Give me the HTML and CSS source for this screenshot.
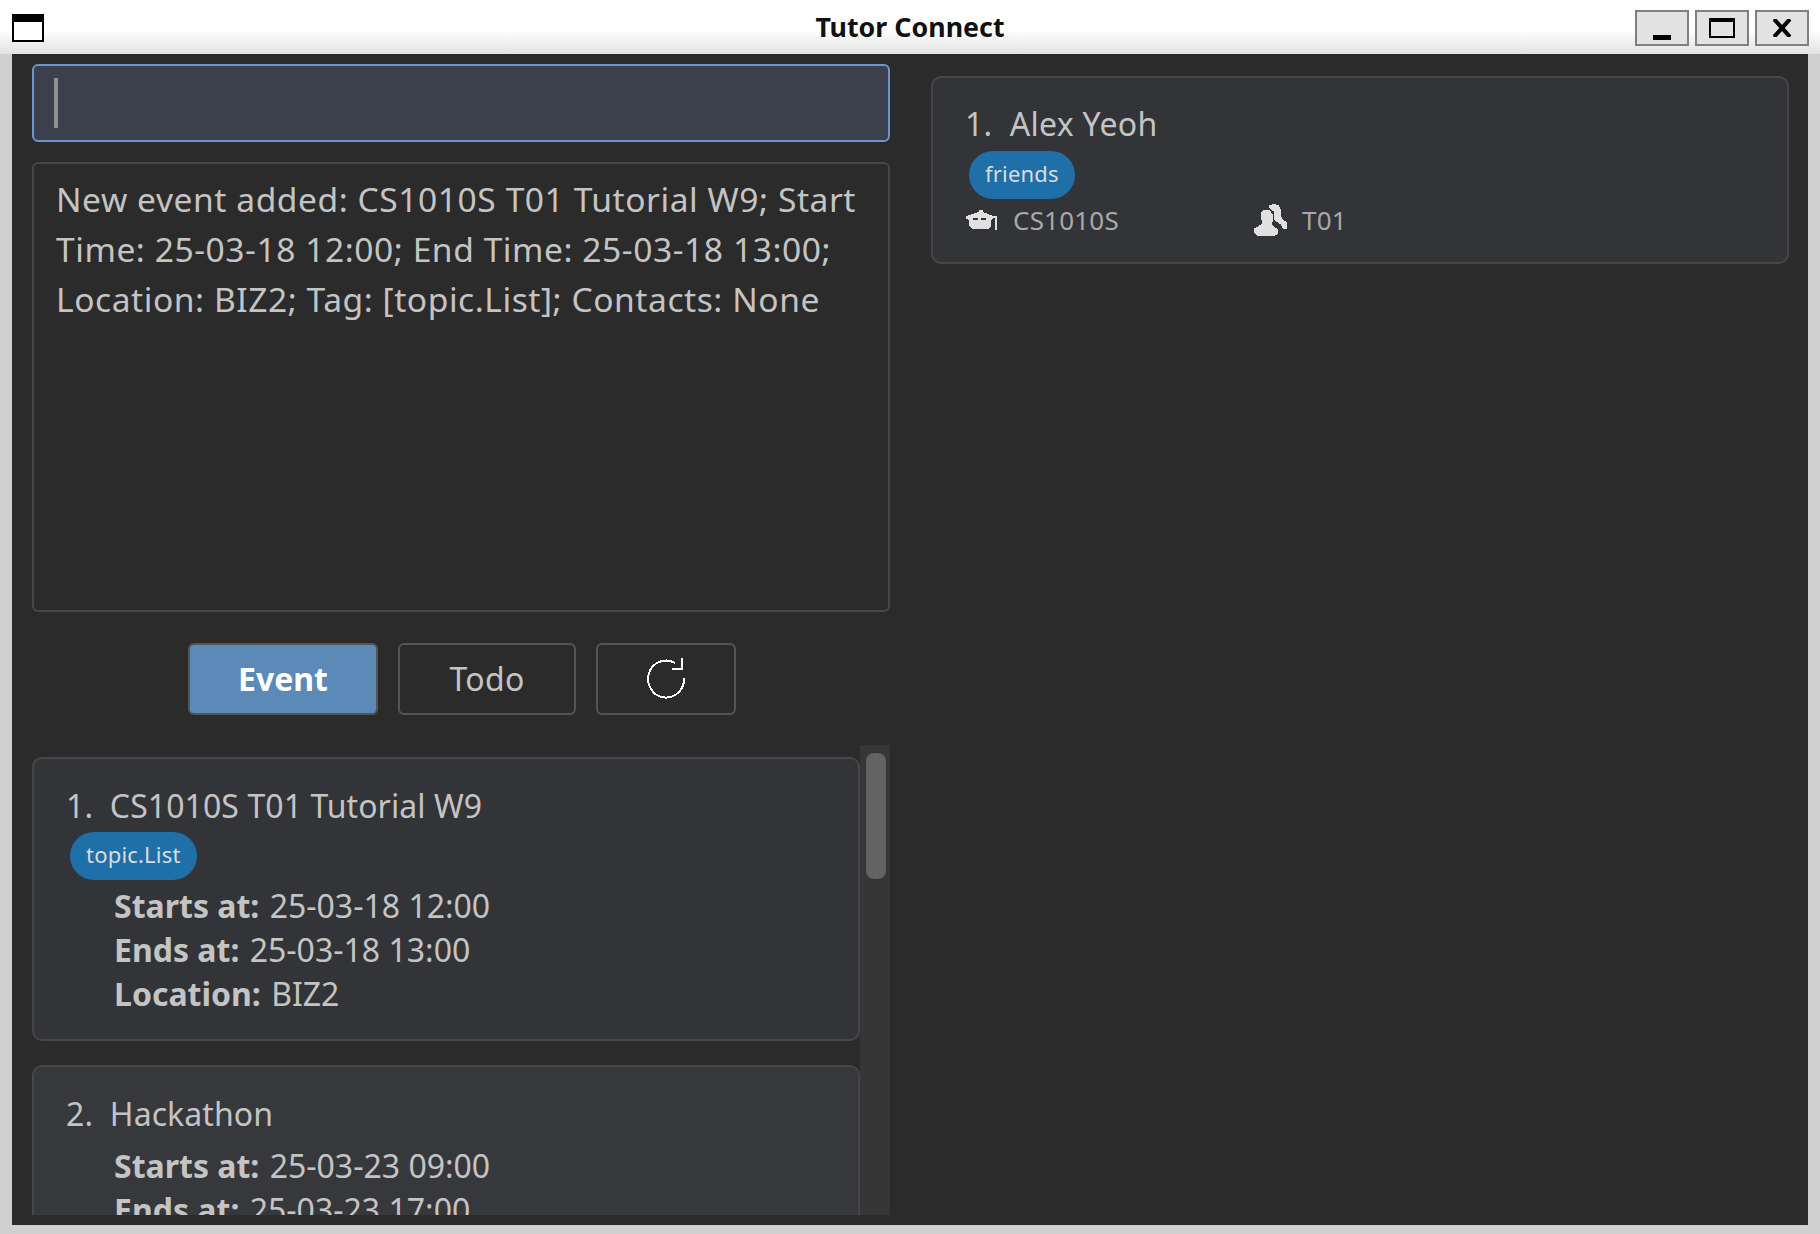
FILE: index.html
```html
<!DOCTYPE html>
<html lang="en">
<head>
<meta charset="UTF-8">
<meta name="viewport" content="width=device-width, initial-scale=1.0">
<title>Tutor Connect</title>
<link rel="stylesheet" href="styles.css">
</head>
<body>
<div class="titlebar">
  <svg class="win-icon" width="32" height="28" viewBox="0 0 32 28"><rect x="1" y="1" width="30" height="26" fill="#fff" stroke="#000" stroke-width="2"/><rect x="0" y="0" width="32" height="8" fill="#000"/></svg>
  <div class="win-title">Tutor Connect</div>
  <div class="win-buttons">
    <div class="win-btn"><svg class="min-icon" width="18" height="5" viewBox="0 0 18 5"><rect width="18" height="5" fill="#000"/></svg></div>
    <div class="win-btn"><svg width="26" height="20" viewBox="0 0 26 20"><rect x="1" y="1" width="24" height="18" fill="none" stroke="#000" stroke-width="2"/><rect x="0" y="0" width="26" height="4" fill="#000"/></svg></div>
    <div class="win-btn"><svg width="18" height="18" viewBox="0 0 18 18"><path d="M1 0 L17 18 M17 0 L1 18" stroke="#000" stroke-width="4" fill="none"/></svg></div>
  </div>
</div>

<div class="main">
  <div class="left">
    <div class="command-box"><div class="caret"></div></div>
    <div class="result-box">New event added: CS1010S T01 Tutorial W9; Start Time: 25-03-18 12:00; End Time: 25-03-18 13:00; Location: BIZ2; Tag: [topic.List]; Contacts: None</div>
    <div class="toggle-row">
      <button class="btn btn-event">Event</button>
      <button class="btn btn-todo">Todo</button>
      <button class="btn btn-refresh">
        <svg class="pixel" width="40" height="42" viewBox="0 0 40 42"><path d="M29 6 A18 18.5 0 1 0 38 21" fill="none" stroke="#fff" stroke-width="2"/><path d="M36 1 V12 H26" fill="none" stroke="#fff" stroke-width="2"/></svg>
      </button>
    </div>
    <div class="list-wrap">
      <div class="list">
        <div class="card event-card">
          <div class="card-title">1.&nbsp; CS1010S T01 Tutorial W9</div>
          <div class="tag-row"><span class="tag">topic.List</span></div>
          <div class="detail"><b>Starts at:</b> 25-03-18 12:00</div>
          <div class="detail"><b>Ends at:</b> 25-03-18 13:00</div>
          <div class="detail"><b>Location:</b> BIZ2</div>
        </div>
        <div class="card event-card second">
          <div class="card-title">2.&nbsp; Hackathon</div>
          <div class="detail first-detail"><b>Starts at:</b> 25-03-23 09:00</div>
          <div class="detail"><b>Ends at:</b> 25-03-23 17:00</div>
        </div>
      </div>
      <div class="scrollbar"><div class="thumb"></div></div>
    </div>
  </div>

  <div class="right">
    <div class="card person-card">
      <div class="card-title">1.&nbsp; Alex Yeoh</div>
      <div class="tag-row"><span class="tag">friends</span></div>
      <div class="person-info">
        <div class="info-item course">
          <svg class="pixel" width="32" height="20" viewBox="0 0 32 20"><path d="M13 0 H17 V2 L27 6 V9 L25 10 V16 L22 19 H6 L3 16 V10 L0 9 V6 L13 2 Z" fill="#e0e0e0"/><path d="M7 9 H12 M15 9 H20" stroke="#333437" stroke-width="2"/><rect x="29" y="6" width="2" height="14" fill="#e0e0e0"/><rect x="26" y="6" width="5" height="2" fill="#e0e0e0"/></svg>
          <span>CS1010S</span>
        </div>
        <div class="info-item">
          <svg class="pixel" width="33" height="32" viewBox="0 0 97 94"><path d="M45 3 L60 0 L72 3 L78 15 V35 L85 45 L97 55 V72 L85 75 L80 62 L72 55 L62 50 L58 40 V22 L45 12 Z" fill="#e0e0e0"/><path d="M28 17 H45 L55 30 V50 L52 58 L60 68 L72 74 V86 L60 94 H12 L0 85 V72 L18 62 L25 55 L20 40 V25 Z" fill="#e0e0e0"/></svg>
          <span>T01</span>
        </div>
      </div>
    </div>
  </div>
</div>
</body>
</html>
```

FILE: styles.css
```css
html, body {
  margin: 0;
  padding: 0;
}
body {
  width: 1820px;
  height: 1234px;
  overflow: hidden;
  background-color: #d0d0d0;
  font-family: "Noto Sans", sans-serif;
  color: #c4c4c4;
}
.pixel {
  shape-rendering: crispEdges;
}

/* window chrome */
.titlebar {
  height: 54px;
  position: relative;
  display: flex;
  align-items: center;
  justify-content: space-between;
  padding: 0 11px 0 12px;
  box-sizing: border-box;
  background: linear-gradient(to bottom, #fff 0, #fff 55%, #e2e2e2 100%);
}
.win-icon {
  display: block;
  margin-top: 2px;
}
.win-title {
  position: absolute;
  left: 0;
  right: 0;
  top: 9px;
  text-align: center;
  font-size: 26.8px;
  line-height: 36px;
  font-weight: 700;
  color: #111;
}
.win-buttons {
  display: flex;
  gap: 6px;
  margin-top: 1px;
}
.win-btn {
  width: 54px;
  height: 36px;
  box-sizing: border-box;
  border: 2px solid #808080;
  background-color: #e2e2e2;
  display: flex;
  align-items: center;
  justify-content: center;
}
.min-icon {
  margin-top: 20px;
}

.main {
  height: 1171px;
  margin: 0 12px;
  display: flex;
  background-color: #2b2b2b;
}

/* left column */
.left {
  width: 858px;
  margin-left: 20px;
  padding-top: 10px;
  display: flex;
  flex-direction: column;
}
.command-box {
  height: 78px;
  box-sizing: border-box;
  border: 2px solid #6d94cc;
  border-radius: 6px;
  background-color: #3c3f4c;
  padding: 12px 0 0 20px;
}
.caret {
  width: 4px;
  height: 50px;
  background-color: #8f8f96;
}
.result-box {
  height: 450px;
  margin-top: 20px;
  box-sizing: border-box;
  border: 2px solid #464646;
  border-radius: 6px;
  padding: 10px 22px;
  font-size: 33.6px;
  letter-spacing: 0.55px;
  line-height: 50px;
  background-color: #2b2b2b;
}
.toggle-row {
  display: flex;
  gap: 20px;
  margin: 31px 0 0 156px;
}
.btn {
  height: 72px;
  box-sizing: border-box;
  border: 2px solid #555;
  border-radius: 6px;
  background-color: #2b2b2b;
  color: #c4c4c4;
  font-family: "Noto Sans", sans-serif;
  font-size: 32px;
  padding: 0 0 2px;
  display: flex;
  align-items: center;
  justify-content: center;
}
.btn-event {
  width: 190px;
  background-color: #5b8ab8;
  color: #fff;
  font-weight: 700;
}
.btn-todo {
  width: 178px;
  letter-spacing: 0.3px;
}
.btn-refresh {
  width: 140px;
}

/* event list */
.list-wrap {
  height: 470px;
  margin-top: 30px;
  display: flex;
  overflow: hidden;
}
.list {
  width: 828px;
  padding-top: 12px;
}
.scrollbar {
  width: 30px;
  background-color: #363636;
  padding: 8px 4px 0 6px;
  box-sizing: border-box;
}
.thumb {
  height: 126px;
  border-radius: 8px;
  background-color: #636363;
}

.card {
  box-sizing: border-box;
  border: 2px solid #464646;
  border-radius: 10px;
  background-color: #333437;
  padding: 0 0 0 32px;
}
.card-title {
  font-size: 32px;
  letter-spacing: 0.08px;
  line-height: 44px;
}
.person-card .card-title {
  letter-spacing: 0.3px;
}
.tag-row {
  margin-left: 4px;
}
.tag {
  display: inline-block;
  height: 48px;
  line-height: 44px;
  padding: 0 16px;
  border-radius: 24px;
  background-color: #1f6fa8;
  color: #dcdcdc;
  font-size: 22px;
  letter-spacing: 0.2px;
}
.event-card {
  height: 284px;
  padding-top: 25px;
}
.event-card .tag-row {
  margin-top: 4px;
  margin-bottom: 4px;
}
.event-card.second {
  height: 300px;
  margin-top: 24px;
  background-color: #37383b;
}
.detail {
  font-size: 32px;
  line-height: 44px;
  margin-left: 48px;
}
.first-detail {
  margin-top: 8px;
}
.detail b {
  font-weight: 700;
  margin-right: 2px;
}

/* person panel */
.right {
  width: 858px;
  margin-left: 41px;
  padding-top: 22px;
}
.person-card {
  height: 188px;
  padding-top: 24px;
}
.person-card .tag-row {
  margin-top: 5px;
}
.person-info {
  display: flex;
  margin-top: 3px;
}
.info-item {
  display: flex;
  align-items: center;
  gap: 15px;
  font-size: 26px;
  letter-spacing: 0.2px;
  line-height: 36px;
  color: #a8a8a8;
}
.info-item.course {
  width: 289px;
  box-sizing: border-box;
  padding-left: 1px;
}
```
